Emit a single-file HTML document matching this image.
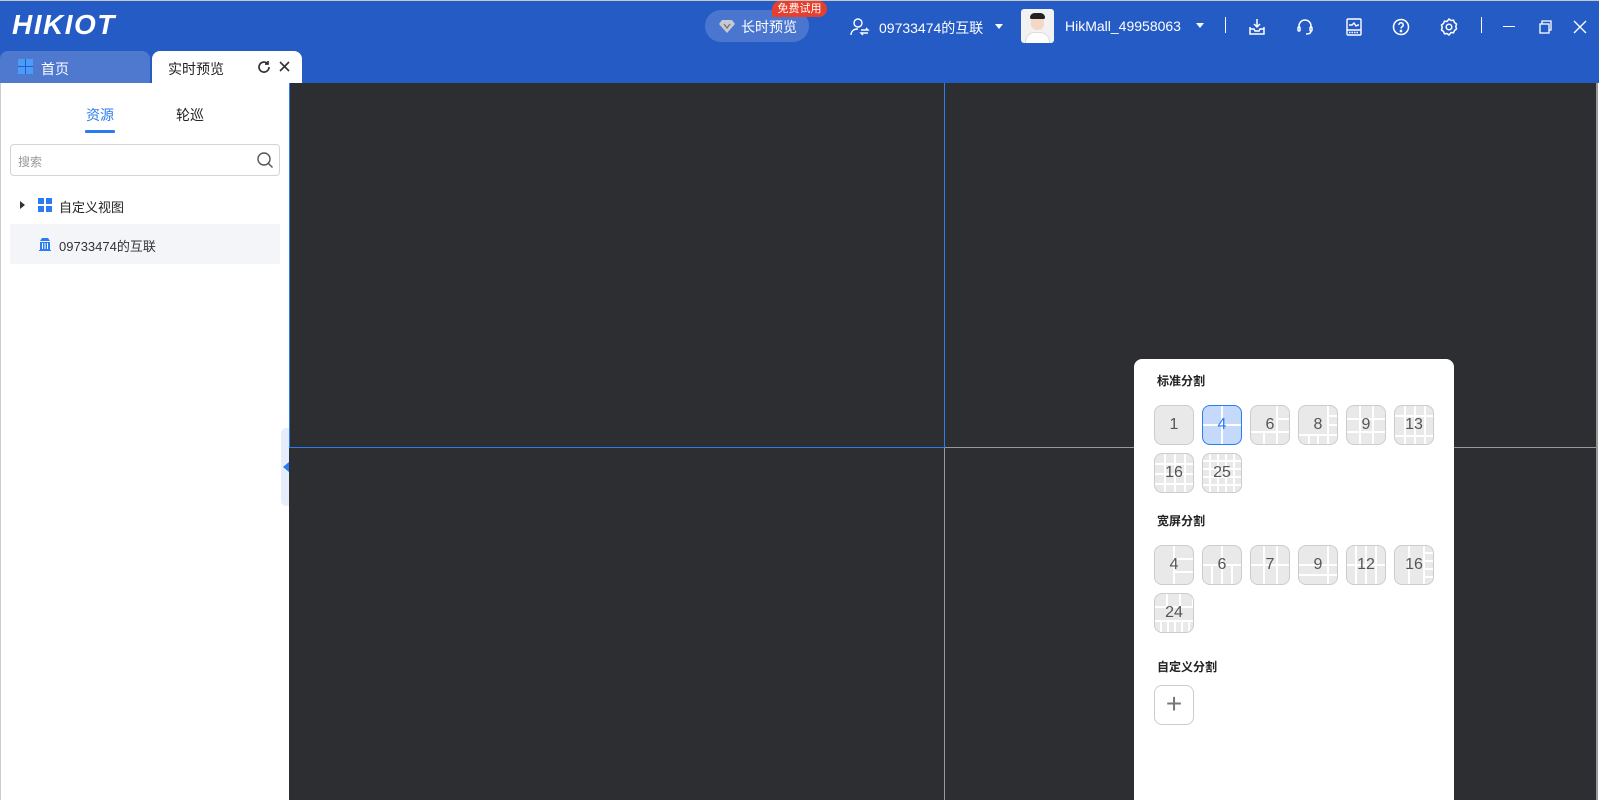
<!DOCTYPE html>
<html><head><meta charset="utf-8">
<style>
*{margin:0;padding:0;box-sizing:border-box}
body{width:1599px;height:800px;overflow:hidden;background:#fff;font-family:"Liberation Sans","Noto Sans CJK SC",sans-serif;position:relative}
.a{position:absolute}
.hdr{left:0;top:0;width:1599px;height:83px;background:#255bc4;border-top:1px solid #c8c8c8}
.w{color:#fff}
.logo{left:12px;top:9px;font-size:28px;font-weight:bold;font-style:italic;color:#fff;letter-spacing:1.5px}
.ic{position:absolute;top:17px;width:20px;height:20px}
.side{left:0;top:83px;width:289px;height:717px;background:#fff;border-left:1px solid #ccc}
.vid{left:289px;top:83px;width:1309px;height:717px;background:#2d2e32;border-right:2px solid #999}
.cell{position:absolute;width:40px;height:40px;border:1px solid #ccc;border-radius:8px;background:#e9e9e9;font-size:16px;color:#555;text-align:center;line-height:38px;overflow:hidden}
.lbl{position:absolute;left:1157px;font-size:12px;font-weight:bold;color:#222}
</style></head><body>
<div class="a hdr"></div>
<div class="a logo">HIKIOT</div>
<div class="a" style="left:705px;top:10px;width:104px;height:32px;border-radius:16px;background:#4a76cf"></div>
<svg class="a" style="left:719px;top:19px" width="16" height="14" viewBox="0 0 16 14"><path d="M3 1h10l3 4-8 9-8-9z" fill="#c9c9d1"/><path d="M5 5l3 4 3-4" stroke="#777" stroke-width="1.4" fill="none"/></svg>
<div class="a w" style="left:741px;top:17px;font-size:14px">长时预览</div>
<div class="a" style="left:772px;top:1px;width:55px;height:16px;border-radius:8px 8px 8px 0;background:#e5402f;color:#fff;font-size:11px;line-height:16px;text-align:center">免费试用</div>
<svg class="a" style="left:850px;top:17px" width="20" height="20" viewBox="0 0 20 20" fill="none" stroke="#fff" stroke-width="1.4"><circle cx="8" cy="6" r="4"/><path d="M1 18c0-4 3-6 7-6"/><path d="M11 13h7l-2-2M18 16h-7l2 2"/></svg>
<div class="a w" style="left:879px;top:18px;font-size:14px">09733474的互联</div>
<div class="a" style="left:995px;top:24px;border:4px solid transparent;border-top:5px solid #fff"></div>
<div class="a" style="left:1021px;top:9px;width:33px;height:34px;background:#f2f2f2;border-radius:3px;overflow:hidden">
<div class="a" style="left:10px;top:6px;width:13px;height:15px;background:#f4d7c4;border-radius:6px"></div>
<div class="a" style="left:9px;top:4px;width:15px;height:6px;background:#222;border-radius:6px 6px 2px 2px"></div>
<div class="a" style="left:4px;top:23px;width:25px;height:14px;background:#fff;border:1px solid #ddd;border-radius:10px 10px 0 0"></div></div>
<div class="a w" style="left:1065px;top:18px;font-size:14px">HikMall_49958063</div>
<div class="a" style="left:1196px;top:23px;border:4px solid transparent;border-top:5px solid #fff"></div>
<div class="a" style="left:1225px;top:17px;width:1px;height:16px;background:#fff"></div>
<svg class="ic" style="left:1247px" viewBox="0 0 20 20" fill="none" stroke="#fff" stroke-width="1.5"><path d="M10 2v8M7 7l3 3 3-3"/><path d="M3 10v7h14v-7M3 12h4l1 2h4l1-2h4"/></svg>
<svg class="ic" style="left:1295px" viewBox="0 0 20 20" fill="none" stroke="#fff" stroke-width="1.5"><path d="M4 11V9a6 6 0 0112 0v2"/><rect x="3" y="10" width="2" height="4" rx="1"/><rect x="15" y="10" width="2" height="4" rx="1"/><path d="M16 14c0 2-2 3-5 3"/></svg>
<svg class="ic" style="left:1344px" viewBox="0 0 20 20" fill="none" stroke="#fff" stroke-width="1.4"><rect x="3" y="2" width="14" height="16" rx="1"/><path d="M5 8h3l2-2 2 3 2-1h1M3 13h14"/><path d="M5 15.5h10" stroke-dasharray="1.5 1"/></svg>
<svg class="ic" style="left:1391px" viewBox="0 0 20 20" fill="none" stroke="#fff" stroke-width="1.5"><circle cx="10" cy="10" r="7.5"/><path d="M7.8 8a2.2 2.2 0 114 1.2c-.8.6-1.8 1-1.8 2.3"/><circle cx="10" cy="14" r=".6" fill="#fff"/></svg>
<svg class="ic" style="left:1439px" viewBox="0 0 20 20" fill="none" stroke="#fff" stroke-width="1.5"><path d="M10 2l2 1.5 2.5-.3 1 2.3 2 1.5-.7 2.5.7 2.5-2 1.5-1 2.3-2.5-.3L10 18l-2-1.5-2.5.3-1-2.3-2-1.5.7-2.5L2.5 8l2-1.5 1-2.3 2.5.3z"/><circle cx="10" cy="10" r="2.8"/></svg>
<div class="a" style="left:1481px;top:17px;width:1px;height:16px;background:#fff"></div>
<div class="a" style="left:1503px;top:26px;width:12px;height:1px;background:#fff"></div>
<svg class="ic" style="left:1535px" viewBox="0 0 20 20" fill="none" stroke="#fff" stroke-width="1.3"><rect x="5" y="7" width="9" height="9"/><path d="M7 7V4h9v9h-2"/></svg>
<svg class="ic" style="left:1570px" viewBox="0 0 20 20" fill="none" stroke="#fff" stroke-width="1.3"><path d="M4 4l12 12M16 4L4 16"/></svg>
<div class="a" style="left:0;top:51px;width:150px;height:32px;background:#4f79cf;border-radius:8px 8px 0 0"></div>
<div class="a" style="left:18px;top:59px;width:15px;height:15px;background:
linear-gradient(#255bc4,#255bc4) 7px 0/1px 15px no-repeat,linear-gradient(#255bc4,#255bc4) 0 7px/15px 1px no-repeat,#4b9bf8"></div>
<div class="a w" style="left:41px;top:59px;font-size:14px">首页</div>
<div class="a" style="left:152px;top:51px;width:150px;height:32px;background:#fff;border-radius:8px 8px 0 0"></div>
<div class="a" style="left:168px;top:59px;font-size:14px;color:#222">实时预览</div>
<svg class="a" style="left:257px;top:60px" width="14" height="14" viewBox="0 0 14 14" fill="none" stroke="#333" stroke-width="1.7"><path d="M12 7a5 5 0 11-1.5-3.5"/><path d="M11 1v3H8" /></svg>
<svg class="a" style="left:279px;top:61px" width="11" height="11" viewBox="0 0 11 11" stroke="#333" stroke-width="1.6"><path d="M1 1l9 9M10 1l-9 9"/></svg>
<div class="a side"></div>
<div class="a" style="left:86px;top:105px;font-size:14px;color:#2b7bf2">资源</div>
<div class="a" style="left:85px;top:130px;width:30px;height:3px;background:#2b7bf2;border-radius:1px"></div>
<div class="a" style="left:176px;top:105px;font-size:14px;color:#222">轮巡</div>
<div class="a" style="left:10px;top:144px;width:270px;height:32px;border:1px solid #d4d4d8;border-radius:4px"></div>
<div class="a" style="left:18px;top:153px;font-size:12px;color:#999">搜索</div>
<svg class="a" style="left:256px;top:151px" width="18" height="18" viewBox="0 0 18 18" fill="none" stroke="#555" stroke-width="1.4"><circle cx="8" cy="8" r="6"/><path d="M12.5 12.5l4 4"/></svg>
<div class="a" style="left:20px;top:201px;border:4px solid transparent;border-left:5px solid #333"></div>
<div class="a" style="left:38px;top:198px;width:14px;height:14px;background:linear-gradient(#fff,#fff) 6px 0/2px 14px no-repeat,linear-gradient(#fff,#fff) 0 6px/14px 2px no-repeat,#2b7bf2"></div>
<div class="a" style="left:59px;top:197px;font-size:13px;color:#222">自定义视图</div>
<div class="a" style="left:10px;top:224px;width:270px;height:40px;background:#f4f5f9"></div>
<svg class="a" style="left:38px;top:237px" width="14" height="14" viewBox="0 0 14 14" fill="#2b7bf2"><path d="M1 13h12v1H1zM2 5h10v8H2z"/><path d="M4 1h6l2 3H2z"/><path d="M4 6h1v6H4zM6.5 6h1v6h-1zM9 6h1v6H9z" fill="#fff"/></svg>
<div class="a" style="left:59px;top:236px;font-size:13px;color:#333">09733474的互联</div>
<div class="a" style="left:281px;top:428px;width:10px;height:78px;background:#e6eefd;border-radius:5px 0 0 5px"></div>
<div class="a" style="left:283px;top:462px;border:5px solid transparent;border-right:6px solid #2b7bf2;border-left:0"></div>
<div class="a vid"></div>
<div class="a" style="left:944px;top:83px;width:1px;height:717px;background:#999"></div>
<div class="a" style="left:289px;top:447px;width:1309px;height:1px;background:#999"></div>
<div class="a" style="left:289px;top:83px;width:656px;height:365px;border:1px solid #2b7bf2;border-top:none"></div>
<div class="a" style="left:1134px;top:359px;width:320px;height:441px;background:#fff;border-radius:8px 8px 0 0"></div>
<div class="lbl" style="top:372px">标准分割</div>
<div class="cell" style="left:1154px;top:405px">1</div>
<div class="cell" style="left:1202px;top:405px;border-color:#2b7bf2;color:#2b7bf2;background:linear-gradient(#fff,#fff) 18px 0/2px 40px no-repeat,linear-gradient(#fff,#fff) 0 18px/40px 2px no-repeat,#c5d9fb">4</div>
<div class="cell" style="left:1250px;top:405px;background:linear-gradient(#fff,#fff) 25px 0/2px 40px no-repeat,linear-gradient(#fff,#fff) 0 25px/40px 2px no-repeat,linear-gradient(#fff,#fff) 25px 12px/15px 2px no-repeat,linear-gradient(#fff,#fff) 12px 25px/2px 15px no-repeat,#e9e9e9">6</div>
<div class="cell" style="left:1298px;top:405px;background:linear-gradient(#fff,#fff) 28px 0/2px 40px no-repeat,linear-gradient(#fff,#fff) 0 28px/40px 2px no-repeat,linear-gradient(#fff,#fff) 28px 9px/12px 2px no-repeat,linear-gradient(#fff,#fff) 28px 18px/12px 2px no-repeat,linear-gradient(#fff,#fff) 9px 28px/2px 12px no-repeat,linear-gradient(#fff,#fff) 18px 28px/2px 12px no-repeat,#e9e9e9">8</div>
<div class="cell" style="left:1346px;top:405px;background:linear-gradient(90deg,transparent 12px,#fff 12px,#fff 14px,transparent 14px,transparent 25px,#fff 25px,#fff 27px,transparent 27px),linear-gradient(transparent 12px,#fff 12px,#fff 14px,transparent 14px,transparent 25px,#fff 25px,#fff 27px,transparent 27px),#e9e9e9">9</div>
<div class="cell" style="left:1394px;top:405px;background:linear-gradient(90deg,transparent 9px,#fff 9px,#fff 11px,transparent 11px,transparent 19px,#fff 19px,#fff 21px,transparent 21px,transparent 29px,#fff 29px,#fff 31px,transparent 31px),linear-gradient(transparent 9px,#fff 9px,#fff 11px,transparent 11px,transparent 29px,#fff 29px,#fff 31px,transparent 31px),#e9e9e9">13</div>
<div class="cell" style="left:1154px;top:453px;background:linear-gradient(90deg,transparent 9px,#fff 9px,#fff 11px,transparent 11px,transparent 19px,#fff 19px,#fff 21px,transparent 21px,transparent 29px,#fff 29px,#fff 31px,transparent 31px),linear-gradient(transparent 9px,#fff 9px,#fff 11px,transparent 11px,transparent 19px,#fff 19px,#fff 21px,transparent 21px,transparent 29px,#fff 29px,#fff 31px,transparent 31px),#e9e9e9">16</div>
<div class="cell" style="left:1202px;top:453px;background:repeating-linear-gradient(90deg,transparent 0 6px,#fff 6px 8px),repeating-linear-gradient(transparent 0 6px,#fff 6px 8px),#e9e9e9">25</div>
<div class="lbl" style="top:512px">宽屏分割</div>
<div class="cell" style="left:1154px;top:545px;background:linear-gradient(#fff,#fff) 18px 0/2px 40px no-repeat,linear-gradient(#fff,#fff) 18px 12px/22px 2px no-repeat,linear-gradient(#fff,#fff) 18px 25px/22px 2px no-repeat,#e9e9e9">4</div>
<div class="cell" style="left:1202px;top:545px;background:linear-gradient(#fff,#fff) 0 18px/40px 2px no-repeat,linear-gradient(#fff,#fff) 18px 0/2px 40px no-repeat,linear-gradient(#fff,#fff) 8px 18px/2px 22px no-repeat,linear-gradient(#fff,#fff) 28px 18px/2px 22px no-repeat,#e9e9e9">6</div>
<div class="cell" style="left:1250px;top:545px;background:linear-gradient(#fff,#fff) 12px 0/2px 40px no-repeat,linear-gradient(#fff,#fff) 25px 0/2px 40px no-repeat,linear-gradient(#fff,#fff) 0 18px/40px 2px no-repeat,#e9e9e9">7</div>
<div class="cell" style="left:1298px;top:545px;background:linear-gradient(#fff,#fff) 28px 0/2px 40px no-repeat,linear-gradient(#fff,#fff) 0 18px/40px 2px no-repeat,linear-gradient(#fff,#fff) 0 28px/40px 2px no-repeat,#e9e9e9">9</div>
<div class="cell" style="left:1346px;top:545px;background:repeating-linear-gradient(90deg,transparent 0 8px,#fff 8px 10px),linear-gradient(transparent 18px,#fff 18px,#fff 20px,transparent 20px),#e9e9e9">12</div>
<div class="cell" style="left:1394px;top:545px;background:linear-gradient(#fff,#fff) 28px 0/2px 40px no-repeat,repeating-linear-gradient(transparent 0 6px,#fff 6px 8px) 29px 0/11px 40px no-repeat,linear-gradient(#fff,#fff) 13px 0/2px 40px no-repeat,#e9e9e9">16</div>
<div class="cell" style="left:1154px;top:593px;background:repeating-linear-gradient(90deg,transparent 0 11px,#fff 11px 13px) 0 0/40px 13px no-repeat,linear-gradient(#fff,#fff) 0 12px/40px 2px no-repeat,linear-gradient(#fff,#fff) 0 26px/40px 2px no-repeat,repeating-linear-gradient(90deg,transparent 0 5px,#fff 5px 7px) 0 26px/40px 14px no-repeat,#e9e9e9">24</div>
<div class="lbl" style="top:658px">自定义分割</div>
<div class="cell" style="left:1154px;top:685px;background:#fff;font-size:28px;font-weight:300;color:#777;line-height:36px">+</div>
</body></html>
